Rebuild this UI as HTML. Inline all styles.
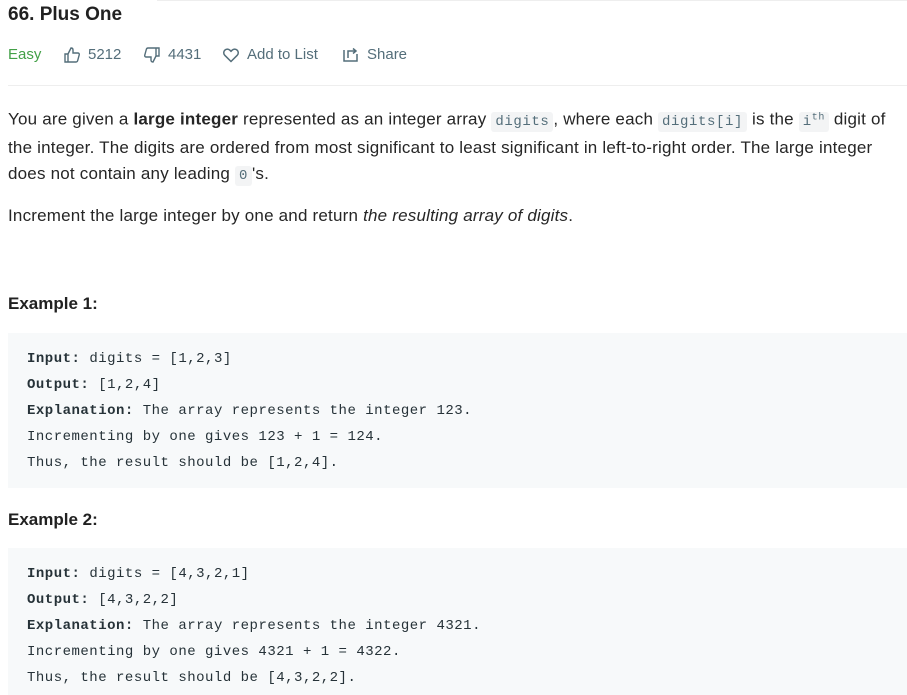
<!DOCTYPE html>
<html><head><style>
body{margin:0;background:#fff;width:907px;height:695px;overflow:hidden;font-family:"Liberation Sans",sans-serif;color:#262626;position:relative}
.abs{position:absolute;white-space:nowrap}
h1{position:absolute;left:8px;top:4px;margin:0;font-size:19px;font-weight:bold;color:#212121}
.meta{position:absolute;top:46px;font-size:15px;color:#546e7a;white-space:nowrap}
p{position:absolute;left:8px;margin:0;font-size:17px;line-height:26px;letter-spacing:0.2px;white-space:nowrap}
code{font-family:"Liberation Mono",monospace;font-size:14px;letter-spacing:0.6px;background:#f3f4f5;color:#546e7a;padding:2px 4px;border-radius:3px}
.ex{position:absolute;left:8px;font-size:17px;font-weight:bold;color:#212121}
pre{position:absolute;left:8px;width:899px;margin:0;background:#f7f9fa;font-family:"Liberation Mono",monospace;font-size:14px;letter-spacing:0.5px;line-height:26px;color:#263238;padding:0 0 0 19px;box-sizing:border-box}
pre b{color:#263238}
</style></head><body>
<div class="abs" style="left:157px;top:0;width:750px;height:1px;background:#eee"></div>
<h1>66. Plus One</h1>
<div class="meta" style="left:8px;color:#43a047">Easy</div>
<svg class="abs" style="left:63px;top:46px" width="18" height="18" viewBox="0 0 18 18" fill="none" stroke="#546e7a" stroke-width="1.4"><path d="M2 8h3v8H2zM5 8l3-6c1.5 0 2 1 2 2v3h5c1 0 1.5 1 1.2 2l-1.5 5.5c-.2.8-.8 1.5-1.7 1.5H5"/></svg>
<div class="meta" style="left:88px">5212</div>
<svg class="abs" style="left:143px;top:46px" width="18" height="18" viewBox="0 0 18 18" fill="none" stroke="#546e7a" stroke-width="1.4"><path d="M16 2v8h-3V2zM13 10l-3 6c-1.5 0-2-1-2-2v-3H3c-1 0-1.5-1-1.2-2l1.5-5.5C3.5 2.7 4.1 2 5 2h8"/></svg>
<div class="meta" style="left:168px">4431</div>
<svg class="abs" style="left:222px;top:46px" width="18" height="18" viewBox="0 0 18 18" fill="none" stroke="#546e7a" stroke-width="1.5"><path d="M9 15.5L2.8 9.3a3.6 3.6 0 015.1-5.1L9 5.3l1.1-1.1a3.6 3.6 0 015.1 5.1z"/></svg>
<div class="meta" style="left:247px">Add to List</div>
<svg class="abs" style="left:342px;top:46px" width="18" height="18" viewBox="0 0 18 18" fill="none" stroke="#546e7a" stroke-width="1.5"><path d="M2 4v11h13V8M6 12V5h7M11 2.5l3 2.5-3 2.5"/></svg>
<div class="meta" style="left:367px">Share</div>
<div class="abs" style="left:8px;top:85px;width:899px;height:1px;background:#eee"></div>
<p style="top:105px">You are given a <b>large integer</b> represented as an integer array <code>digits</code>, where each <code>digits[i]</code> is the <code>i<sup style="font-size:10px">th</sup></code> digit of<br>the integer. The digits are ordered from most significant to least significant in left-to-right order. The large integer<br>does not contain any leading <code>0</code>'s.</p>
<p style="top:203px">Increment the large integer by one and return <i>the resulting array of digits</i>.</p>
<div class="ex" style="top:294px">Example 1:</div>
<pre style="top:333px;height:155px;padding-top:13px"><b>Input:</b> digits = [1,2,3]
<b>Output:</b> [1,2,4]
<b>Explanation:</b> The array represents the integer 123.
Incrementing by one gives 123 + 1 = 124.
Thus, the result should be [1,2,4].</pre>
<div class="ex" style="top:510px">Example 2:</div>
<pre style="top:548px;height:147px;padding-top:13px"><b>Input:</b> digits = [4,3,2,1]
<b>Output:</b> [4,3,2,2]
<b>Explanation:</b> The array represents the integer 4321.
Incrementing by one gives 4321 + 1 = 4322.
Thus, the result should be [4,3,2,2].</pre>
</body></html>
